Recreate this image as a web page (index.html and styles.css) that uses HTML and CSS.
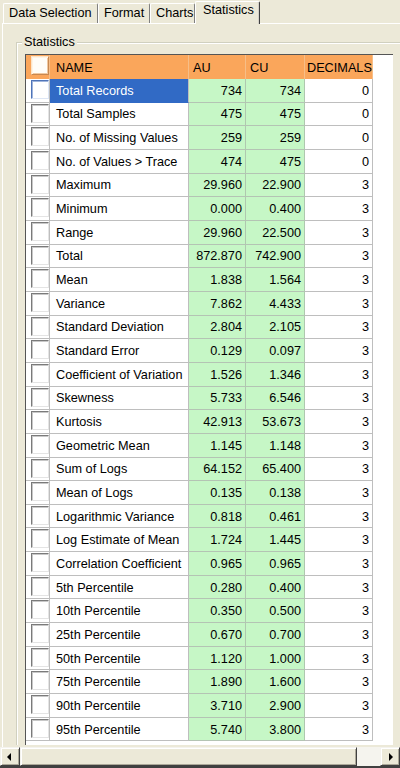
FILE: index.html
```html
<!DOCTYPE html>
<html>
<head>
<meta charset="utf-8">
<link rel="stylesheet" href="styles.css">
</head>
<body>
<div class="win">
  <div class="tabs">
    <div class="tab t1">Data Selection</div>
    <div class="tab t2">Format</div>
    <div class="tab t3">Charts</div>
    <div class="tab sel">Statistics</div>
  </div>
  <div class="page">
    <div class="group">
      <div class="legend">Statistics</div>
      <div class="grid">
        <div class="c hd ck"><span class="cb cb-hd"></span></div><div class="c hd nm">NAME</div><div class="c hd au">AU</div><div class="c hd cu">CU</div><div class="c hd dc">DECIMALS</div>

        <div class="c ck"><span class="cb cb-sel"></span></div><div class="c nm selected">Total Records</div><div class="c g num">734</div><div class="c g num">734</div><div class="c num">0</div>
        <div class="c ck"><span class="cb"></span></div><div class="c nm">Total Samples</div><div class="c g num">475</div><div class="c g num">475</div><div class="c num">0</div>
        <div class="c ck"><span class="cb"></span></div><div class="c nm">No. of Missing Values</div><div class="c g num">259</div><div class="c g num">259</div><div class="c num">0</div>
        <div class="c ck"><span class="cb"></span></div><div class="c nm">No. of Values &gt; Trace</div><div class="c g num">474</div><div class="c g num">475</div><div class="c num">0</div>
        <div class="c ck"><span class="cb"></span></div><div class="c nm">Maximum</div><div class="c g num">29.960</div><div class="c g num">22.900</div><div class="c num">3</div>
        <div class="c ck"><span class="cb"></span></div><div class="c nm">Minimum</div><div class="c g num">0.000</div><div class="c g num">0.400</div><div class="c num">3</div>
        <div class="c ck"><span class="cb"></span></div><div class="c nm">Range</div><div class="c g num">29.960</div><div class="c g num">22.500</div><div class="c num">3</div>
        <div class="c ck"><span class="cb"></span></div><div class="c nm">Total</div><div class="c g num">872.870</div><div class="c g num">742.900</div><div class="c num">3</div>
        <div class="c ck"><span class="cb"></span></div><div class="c nm">Mean</div><div class="c g num">1.838</div><div class="c g num">1.564</div><div class="c num">3</div>
        <div class="c ck"><span class="cb"></span></div><div class="c nm">Variance</div><div class="c g num">7.862</div><div class="c g num">4.433</div><div class="c num">3</div>
        <div class="c ck"><span class="cb"></span></div><div class="c nm">Standard Deviation</div><div class="c g num">2.804</div><div class="c g num">2.105</div><div class="c num">3</div>
        <div class="c ck"><span class="cb"></span></div><div class="c nm">Standard Error</div><div class="c g num">0.129</div><div class="c g num">0.097</div><div class="c num">3</div>
        <div class="c ck"><span class="cb"></span></div><div class="c nm">Coefficient of Variation</div><div class="c g num">1.526</div><div class="c g num">1.346</div><div class="c num">3</div>
        <div class="c ck"><span class="cb"></span></div><div class="c nm">Skewness</div><div class="c g num">5.733</div><div class="c g num">6.546</div><div class="c num">3</div>
        <div class="c ck"><span class="cb"></span></div><div class="c nm">Kurtosis</div><div class="c g num">42.913</div><div class="c g num">53.673</div><div class="c num">3</div>
        <div class="c ck"><span class="cb"></span></div><div class="c nm">Geometric Mean</div><div class="c g num">1.145</div><div class="c g num">1.148</div><div class="c num">3</div>
        <div class="c ck"><span class="cb"></span></div><div class="c nm">Sum of Logs</div><div class="c g num">64.152</div><div class="c g num">65.400</div><div class="c num">3</div>
        <div class="c ck"><span class="cb"></span></div><div class="c nm">Mean of Logs</div><div class="c g num">0.135</div><div class="c g num">0.138</div><div class="c num">3</div>
        <div class="c ck"><span class="cb"></span></div><div class="c nm">Logarithmic Variance</div><div class="c g num">0.818</div><div class="c g num">0.461</div><div class="c num">3</div>
        <div class="c ck"><span class="cb"></span></div><div class="c nm">Log Estimate of Mean</div><div class="c g num">1.724</div><div class="c g num">1.445</div><div class="c num">3</div>
        <div class="c ck"><span class="cb"></span></div><div class="c nm">Correlation Coefficient</div><div class="c g num">0.965</div><div class="c g num">0.965</div><div class="c num">3</div>
        <div class="c ck"><span class="cb"></span></div><div class="c nm">5th Percentile</div><div class="c g num">0.280</div><div class="c g num">0.400</div><div class="c num">3</div>
        <div class="c ck"><span class="cb"></span></div><div class="c nm">10th Percentile</div><div class="c g num">0.350</div><div class="c g num">0.500</div><div class="c num">3</div>
        <div class="c ck"><span class="cb"></span></div><div class="c nm">25th Percentile</div><div class="c g num">0.670</div><div class="c g num">0.700</div><div class="c num">3</div>
        <div class="c ck"><span class="cb"></span></div><div class="c nm">50th Percentile</div><div class="c g num">1.120</div><div class="c g num">1.000</div><div class="c num">3</div>
        <div class="c ck"><span class="cb"></span></div><div class="c nm">75th Percentile</div><div class="c g num">1.890</div><div class="c g num">1.600</div><div class="c num">3</div>
        <div class="c ck"><span class="cb"></span></div><div class="c nm">90th Percentile</div><div class="c g num">3.710</div><div class="c g num">2.900</div><div class="c num">3</div>
        <div class="c ck"><span class="cb"></span></div><div class="c nm">95th Percentile</div><div class="c g num">5.740</div><div class="c g num">3.800</div><div class="c num">3</div>
      </div>
    </div>
  </div>
  <div class="hscroll">
    <div class="sbtn"><span class="arr-l"></span></div>
    <div class="thumb"></div>
    <div class="track"></div>
    <div class="sbtn"><span class="arr-r"></span></div>
  </div>
  <div class="bottom"></div>
</div>
</body>
</html>
```

FILE: styles.css
```css
html, body {
  margin: 0;
  padding: 0;
}
body {
  width: 400px;
  height: 768px;
  overflow: hidden;
  background: #ECE9D8;
  font-family: "Liberation Sans", Arial, sans-serif;
  font-size: 12.7px;
  color: #000;
}
.win {
  display: flex;
  flex-direction: column;
  height: 768px;
}
.tabs {
  display: flex;
  align-items: flex-end;
  height: 23px;
  padding-left: 3px;
  flex: none;
}
.tab {
  box-sizing: border-box;
  height: 20px;
  line-height: 18px;
  padding-left: 5px;
  border-top: 1px solid #fff;
  border-left: 1px solid #fff;
  border-right: 1px solid #808080;
  border-radius: 2px 2px 0 0;
  background: #ECE9D8;
  white-space: nowrap;
  overflow: hidden;
}
.t1 { width: 95px; }
.t2 { width: 52px; }
.t3 { width: 45px; }
.sel {
  width: 65px;
  height: 23px;
  line-height: 17px;
  padding-left: 7px;
  margin-bottom: -1px;
  position: relative;
  z-index: 1;
  box-shadow: inset -1px 0 0 #D4D0C8;
  border-right-color: #404040;
}
.page {
  flex: 1;
  min-height: 0;
  overflow: hidden;
  margin-left: 2px;
  border-top: 1px solid #fff;
  border-left: 1px solid #fff;
  padding-left: 13px;
  padding-top: 18px;
}
.group {
  position: relative;
  width: 600px;
  border-top: 1px solid #D0D0BF;
  border-left: 1px solid #D0D0BF;
  box-shadow: inset 1px 1px 0 #fff;
  padding-left: 8px;
  padding-top: 11px;
}
.legend {
  position: absolute;
  left: 5px;
  top: -8px;
  padding: 0 2px;
  line-height: 15px;
  background: #ECE9D8;
}
.grid {
  box-sizing: border-box;
  width: 368px;
  height: 691px;
  background: #fff;
  border-top: 1px solid #555;
  border-left: 1px solid #555;
  display: grid;
  grid-template-columns: 24px 139px 57px 59px 68px;
  grid-template-rows: 24px repeat(28, 23.67px);
  align-content: start;
  overflow: hidden;
}
.c {
  box-sizing: border-box;
  border-right: 1px solid #BEBEBE;
  border-bottom: 1px solid #BEBEBE;
  display: flex;
  align-items: center;
  padding-top: 1px;
  white-space: nowrap;
  overflow: hidden;
  background: #fff;
}
.hd {
  background: #FAA65B;
  border-bottom: none;
  border-right: 1px solid #F6BE88;
}
.nm { padding-left: 6px; }
.hd.au, .hd.cu { padding-left: 4px; }
.hd.dc { padding-left: 2px; }
.num {
  justify-content: flex-end;
  padding-right: 3px;
}
.g {
  background: #C6F7C6;
  border-right-color: #AFC8AF;
  border-bottom-color: #B4C4B4;
}
.selected {
  background: #316AC5;
  color: #fff;
  border-bottom-color: #316AC5;
}
.ck {
  padding-left: 5px;
  align-items: flex-start;
  padding-top: 1px;
}
.cb {
  box-sizing: border-box;
  display: block;
  width: 18px;
  height: 19px;
  background: #fff;
  border-top: 1px solid #7A7A7A;
  border-left: 1px solid #7A7A7A;
  border-right: 1px solid #E4E4E4;
  border-bottom: 1px solid #E4E4E4;
  box-shadow: inset 1px 1px 0 #C8C8C8;
}
.cb-hd {
  background: #FFFDF8;
  border-color: #FCE4C8 #C88850 #C88850 #FCE4C8;
  box-shadow: inset 1px 1px 0 #FFF4E4, inset -1px -1px 0 #F0C8A0;
}
.cb-sel {
  border-color: #4F74B8 #DDE6F5 #DDE6F5 #4F74B8;
  box-shadow: inset 1px 1px 0 #9FB5DD;
}
.hscroll {
  flex: none;
  height: 19px;
  display: flex;
}
.sbtn, .thumb {
  box-sizing: border-box;
  background: #ECE9D8;
  border-top: 1px solid #F4F3EE;
  border-left: 1px solid #F4F3EE;
  border-right: 1px solid #404040;
  border-bottom: 1px solid #404040;
  box-shadow: inset 1px 1px 0 #fff, inset -1px -1px 0 #ACA899;
}
.sbtn {
  width: 20px;
  display: flex;
  align-items: center;
  justify-content: center;
}
.thumb {
  width: 337px;
}
.track {
  width: 23px;
  background: #F5F4EE;
}
.arr-l {
  width: 0;
  height: 0;
  border-top: 4px solid transparent;
  border-bottom: 4px solid transparent;
  border-right: 4px solid #000;
  margin-left: -3px;
}
.arr-r {
  width: 0;
  height: 0;
  border-top: 4px solid transparent;
  border-bottom: 4px solid transparent;
  border-left: 4px solid #000;
  margin-left: 2px;
}
.bottom {
  flex: none;
  height: 2px;
  background: #404040;
}
```
